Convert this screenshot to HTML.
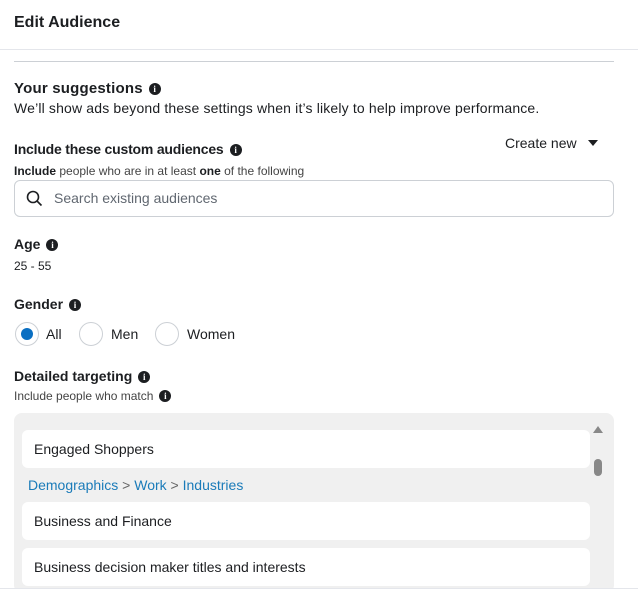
<!DOCTYPE html>
<html><head><style>
*{margin:0;padding:0;box-sizing:border-box}
body{width:638px;height:593px;background:#fff;position:relative;overflow:hidden;font-family:"Liberation Sans",sans-serif;color:#1c1e21}
.a{position:absolute;white-space:nowrap}
.b{font-weight:bold}
.i{display:inline-block;width:12px;height:12px;border-radius:50%;background:#1c1e21;color:#fff;font-size:9px;font-weight:bold;text-align:center;line-height:12px;font-family:"Liberation Serif",serif;vertical-align:1px;margin-left:6px}
.r{position:absolute;width:24px;height:24px;border:1px solid #ccd0d5;border-radius:50%;background:#fff}
.item{position:absolute;left:22px;width:568px;height:38px;background:#fff;border-radius:6px;font-size:14px;padding-left:12px;line-height:38px}
</style></head><body>
<div class="a b" style="left:14px;top:14px;font-size:16px">Edit Audience</div>
<div class="a" style="left:0;top:49px;width:638px;height:1px;background:#e4e6eb"></div>
<div class="a" style="left:14px;top:61px;width:600px;height:1px;background:#ccd0d5"></div>
<div class="a b" style="left:14px;top:80px;font-size:15px;letter-spacing:0.2px">Your suggestions<span class="i">i</span></div>
<div class="a" style="left:14px;top:100px;font-size:14px;letter-spacing:0.16px">We’ll show ads beyond these settings when it’s likely to help improve performance.</div>
<div class="a b" style="left:14px;top:141px;font-size:14px;letter-spacing:-0.2px">Include these custom audiences<span class="i">i</span></div>
<div class="a" style="left:505px;top:135px;font-size:14px">Create new</div>
<div class="a" style="left:588px;top:140px;width:0;height:0;border-left:5px solid transparent;border-right:5px solid transparent;border-top:6px solid #1c1e21"></div>
<div class="a" style="left:14px;top:164px;font-size:12px;color:#444"><b style="font-weight:600;color:#1c1e21">Include</b> people who are in at least <b style="color:#1c1e21">one</b> of the following</div>
<div class="a" style="left:14px;top:180px;width:600px;height:37px;border:1px solid #ccd0d5;border-radius:6px"></div>
<svg class="a" style="left:26px;top:190px" width="17" height="17" viewBox="0 0 17 17"><circle cx="7" cy="7" r="5.5" fill="none" stroke="#1c1e21" stroke-width="1.6"/><path d="M11 11L15.5 15.5" stroke="#1c1e21" stroke-width="1.6"/></svg>
<div class="a" style="left:54px;top:190px;font-size:14px;color:#606770">Search existing audiences</div>
<div class="a b" style="left:14px;top:236px;font-size:14px">Age<span class="i">i</span></div>
<div class="a" style="left:14px;top:259px;font-size:12px">25 - 55</div>
<div class="a b" style="left:14px;top:296px;font-size:14px">Gender<span class="i">i</span></div>
<div class="r" style="left:15px;top:322px"><div style="position:absolute;left:5px;top:5px;width:12px;height:12px;border-radius:50%;background:#0a6fc2"></div></div>
<div class="a" style="left:46px;top:326px;font-size:14px">All</div>
<div class="r" style="left:79px;top:322px"></div>
<div class="a" style="left:111px;top:326px;font-size:14px">Men</div>
<div class="r" style="left:155px;top:322px"></div>
<div class="a" style="left:187px;top:326px;font-size:14px">Women</div>
<div class="a b" style="left:14px;top:368px;font-size:14px">Detailed targeting<span class="i">i</span></div>
<div class="a" style="left:14px;top:389px;font-size:12px;color:#444">Include people who match<span class="i" style="background:#1c1e21">i</span></div>
<div class="a" style="left:14px;top:413px;width:600px;height:180px;background:#f0f0f0;border-radius:8px"></div>
<div class="item" style="top:430px">Engaged Shoppers</div>
<div class="a" style="left:28px;top:477px;font-size:14px;color:#1a7bb9">Demographics <span style="color:#666">&gt;</span> Work <span style="color:#666">&gt;</span> Industries</div>
<div class="item" style="top:502px">Business and Finance</div>
<div class="item" style="top:548px">Business decision maker titles and interests</div>
<div class="a" style="left:593px;top:426px;width:0;height:0;border-left:5px solid transparent;border-right:5px solid transparent;border-bottom:7px solid #888"></div>
<div class="a" style="left:594px;top:459px;width:8px;height:17px;border-radius:4px;background:#888"></div>
<div class="a" style="left:0;top:588px;width:638px;height:5px;background:#fff;border-top:1px solid #e4e6eb"></div>
</body></html>
